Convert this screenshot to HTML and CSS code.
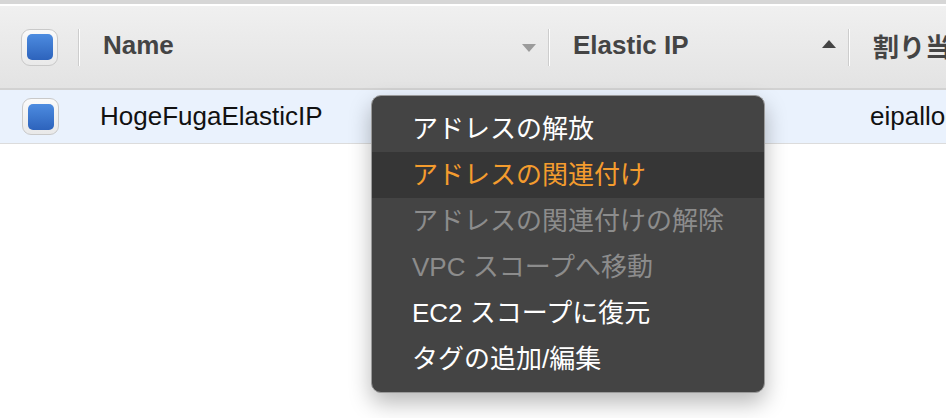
FILE: index.html
```html
<!DOCTYPE html>
<html>

<head>
    <meta charset="UTF-8">
    <title>Elastic IPs</title>
    <link rel="stylesheet" href="styles.css">
</head>

<body>
    <div class="top-band"></div>

    <div class="table">
        <div class="table-row table-head">
            <div class="cell cell-check">
                <span class="checkbox"><span class="checkbox-mark"></span></span>
                <span class="sep"></span>
            </div>
            <div class="cell">
                <span class="head-label">Name</span>
                <span class="sort sort-down"></span>
                <span class="sep"></span>
            </div>
            <div class="cell">
                <span class="head-label">Elastic IP</span>
                <span class="sort sort-up"></span>
                <span class="sep"></span>
            </div>
            <div class="cell">
                <span class="head-label">割り当て ID</span>
            </div>
        </div>

        <div class="table-row table-body selected">
            <div class="cell cell-check">
                <span class="checkbox"><span class="checkbox-mark"></span></span>
            </div>
            <div class="cell">HogeFugaElasticIP</div>
            <div class="cell"></div>
            <div class="cell">eipalloc-0a1b2c3d</div>
        </div>
    </div>

    <div class="context-menu">
        <div class="menu-item">アドレスの解放</div>
        <div class="menu-item active">アドレスの関連付け</div>
        <div class="menu-item disabled">アドレスの関連付けの解除</div>
        <div class="menu-item disabled">VPC スコープへ移動</div>
        <div class="menu-item">EC2 スコープに復元</div>
        <div class="menu-item">タグの追加/編集</div>
    </div>
</body>

</html>
```

FILE: styles.css
```css
body {
    font-family: "Liberation Sans", Arial, "Noto Sans CJK JP", sans-serif;
    margin: 0;
    padding: 0;
    background-color: white;
    width: 946px;
    height: 418px;
    overflow: hidden;
    position: relative;
}

.top-band {
    height: 4px;
    background-color: #d6d6d6;
    border-bottom: 2px solid #ffffff;
}

.table-row {
    display: grid;
    grid-template-columns: 80px 470px 300px 1fr;
    white-space: nowrap;
    overflow: hidden;
}

.table-head {
    height: 82px;
    background: linear-gradient(#f0f0f0, #e3e3e3);
    border-bottom: 2px solid #d2d2d2;
}

.table-body {
    height: 53px;
    border-bottom: 1px solid #dcdcdc;
    font-size: 26px;
    color: #111;
}

.table-body.selected {
    background-color: #eaf2fd;
}

.cell {
    display: flex;
    align-items: center;
    padding-left: 23px;
    min-width: 0;
}

.table-body .cell {
    padding-left: 20px;
}

.cell-check {
    padding-left: 21px;
}

.table-body .cell-check {
    padding-left: 22px;
}

.head-label {
    font-size: 26px;
    font-weight: bold;
    color: #444;
    margin-top: -4px;
}

.checkbox {
    width: 35px;
    height: 35px;
    border: 1px solid #c9c9c9;
    border-radius: 9px;
    background: linear-gradient(#fafafa, #e9e9e9);
    display: flex;
    align-items: center;
    justify-content: center;
}

.checkbox-mark {
    width: 26px;
    height: 26px;
    border-radius: 5px;
    background: linear-gradient(#4d8ce0, #2d63bc);
}

.sep {
    margin-left: auto;
    width: 1px;
    height: 37px;
    background-color: #cdcdcd;
    border-right: 1px solid #ffffff;
}

.sort {
    margin-left: auto;
    margin-right: 12px;
    width: 0;
    height: 0;
    border-left: 7px solid transparent;
    border-right: 7px solid transparent;
}

.sort + .sep {
    margin-left: 0;
}

.sort-down {
    border-top: 8px solid #9b9b9b;
    margin-top: 2px;
}

.sort-up {
    border-bottom: 8px solid #444;
    margin-top: -6px;
}

.context-menu {
    position: absolute;
    left: 371px;
    top: 95px;
    width: 392px;
    padding: 10px 0 10px;
    background-color: #444444;
    border: 1px solid #9a9a9a;
    border-radius: 10px;
    box-shadow: 0 10px 22px rgba(0, 0, 0, 0.28);
    font-family: "Liberation Sans", Arial, "Noto Sans CJK JP", sans-serif;
    font-size: 26px;
}

.menu-item {
    height: 46px;
    line-height: 46px;
    padding-left: 40px;
    color: #ffffff;
    white-space: nowrap;
}

.menu-item.active {
    background-color: #363636;
    color: #f49c2e;
}

.menu-item.disabled {
    color: #8c8c8c;
}
```
